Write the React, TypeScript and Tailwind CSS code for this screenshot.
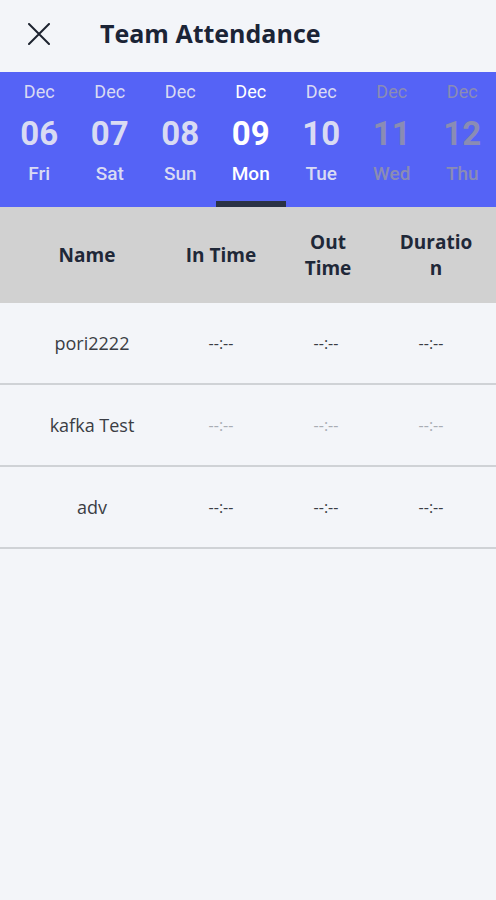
import React from "react";

type Day = { num: string; day: string; state: "past" | "active" | "future" };

const days: Day[] = [
  { num: "06", day: "Fri", state: "past" },
  { num: "07", day: "Sat", state: "past" },
  { num: "08", day: "Sun", state: "past" },
  { num: "09", day: "Mon", state: "active" },
  { num: "10", day: "Tue", state: "past" },
  { num: "11", day: "Wed", state: "future" },
  { num: "12", day: "Thu", state: "future" },
];

const rows = [
  { name: "pori2222", faded: false },
  { name: "kafka Test", faded: true },
  { name: "adv", faded: false },
];

export default function App() {
  return (
    <div className="min-h-[900px] bg-[#f3f5f9] font-['Open_Sans',sans-serif]">
      {/* Top bar */}
      <header className="h-[72px] flex items-center pb-[5px]">
        <div className="w-[78px] flex justify-center">
          <svg width="22" height="22" viewBox="0 0 22 22" fill="none" stroke="#1d2330" strokeWidth="2" strokeLinecap="round">
            <path d="M1 1L21 21M21 1L1 21" />
          </svg>
        </div>
        <h1 className="ml-[22px] text-[25px] font-bold text-[#1b2436] leading-none">Team Attendance</h1>
      </header>

      {/* Date strip */}
      <div className="h-[135px] bg-[#5563f6] flex pl-[4px] font-['Roboto',sans-serif]">
        {days.map((d) => {
          const color =
            d.state === "active" ? "text-white" : d.state === "future" ? "text-[#8a8cb4]" : "text-[#d9dbf3]";
          return (
            <div key={d.num} className={`w-[70.5px] shrink-0 flex flex-col items-center ${color}`}>
              <span className="mt-[8px] text-[18px] leading-[24px]">Dec</span>
              <span className="mt-[11px] text-[33px] font-bold leading-[38px]">{d.num}</span>
              <span className="mt-[9px] text-[19px] font-medium leading-[24px]">{d.day}</span>
              <div className="flex-1" />
              {d.state === "active" ? (
                <div className="h-[6px] w-full bg-[#2a3245]" />
              ) : (
                <div className="h-[6px]" />
              )}
            </div>
          );
        })}
      </div>

      {/* Table header */}
      <div className="h-[96px] bg-[#d1d1d1] flex items-center text-[19px] font-bold text-[#1f2838] leading-[26px]">
        <div className="w-[174px] text-center">Name</div>
        <div className="w-[94px] text-center">In Time</div>
        <div className="w-[120px] flex justify-center">
          <span className="w-[60px] text-center">Out Time</span>
        </div>
        <div className="w-[96px] flex justify-center">
          <span className="w-[80px] text-center break-all">Duration</span>
        </div>
      </div>

      {/* Rows */}
      {rows.map((r) => {
        const dash = r.faded ? "text-[#a9adb4]" : "text-[#3a3d44]";
        return (
          <div key={r.name} className="h-[82px] flex items-center border-b-2 border-[#cfd2d6] text-[18px]">
            <div className="w-[184px] text-center text-[#3a3d44]">{r.name}</div>
            <div className={`w-[74px] text-center text-[16px] ${dash}`}>--:--</div>
            <div className={`w-[136px] text-center text-[16px] ${dash}`}>--:--</div>
            <div className={`w-[74px] text-center text-[16px] ${dash}`}>--:--</div>
          </div>
        );
      })}
    </div>
  );
}
